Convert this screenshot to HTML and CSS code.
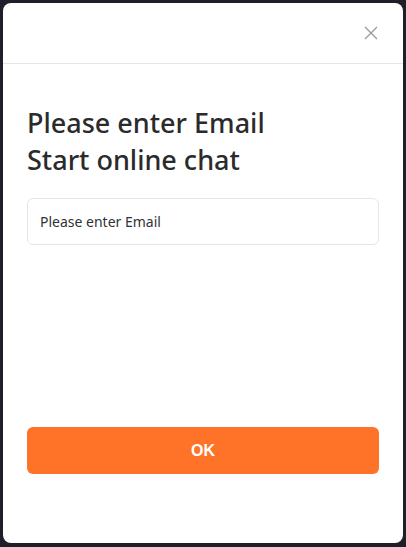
FILE: index.html
```html
<!DOCTYPE html>
<html lang="en">
<head>
  <meta charset="UTF-8">
  <meta name="viewport" content="width=device-width, initial-scale=1.0">
  <title>Start online chat</title>
  <link rel="stylesheet" href="styles.css">
</head>
<body>
  <div class="dialog">
    <div class="dialog-header">
      <button class="close-btn" aria-label="Close">
        <svg width="14" height="14" viewBox="0 0 14 14">
          <path d="M1 1L13 13M13 1L1 13" stroke="#9a9a9a" stroke-width="1.3" fill="none"/>
        </svg>
      </button>
    </div>
    <div class="dialog-body">
      <h2 class="title">Please enter Email<br>Start online chat</h2>
      <input class="email-input" type="text" placeholder="Please enter Email">
      <button class="ok-btn">OK</button>
    </div>
  </div>
</body>
</html>
```

FILE: styles.css
```css
html, body {
  height: 100%;
}

body {
  margin: 0;
  padding: 3px;
  box-sizing: border-box;
  background: #1e1f29;
  font-family: "Noto Sans", sans-serif;
}

.dialog {
  height: 540px;
  width: 400px;
  background: #fff;
  border-radius: 8px;
  display: flex;
  flex-direction: column;
}

.dialog-header {
  height: 60px;
  border-bottom: 1px solid #e6e6e6;
  display: flex;
  justify-content: flex-end;
  align-items: center;
  padding-right: 25px;
}

.close-btn {
  background: none;
  border: none;
  padding: 0;
  width: 14px;
  height: 14px;
  cursor: pointer;
}

.dialog-body {
  padding: 40px 24px 0;
  display: flex;
  flex-direction: column;
}

.title {
  margin: 0;
  font-size: 27px;
  font-weight: 500;
  line-height: 37px;
  color: #2b2b2b;
}

.email-input {
  margin-top: 20px;
  height: 47px;
  box-sizing: border-box;
  border: 1px solid #e6e6e6;
  border-radius: 6px;
  padding: 0 12px;
  font-family: inherit;
  font-size: 14px;
  outline: none;
}

.email-input::placeholder {
  color: #333;
}

.ok-btn {
  margin-top: 182px;
  height: 47px;
  border: none;
  border-radius: 6px;
  background: #ff7329;
  color: #fff;
  font-family: "Liberation Sans", Arial, sans-serif;
  font-weight: bold;
  font-size: 16px;
  cursor: pointer;
}
```
